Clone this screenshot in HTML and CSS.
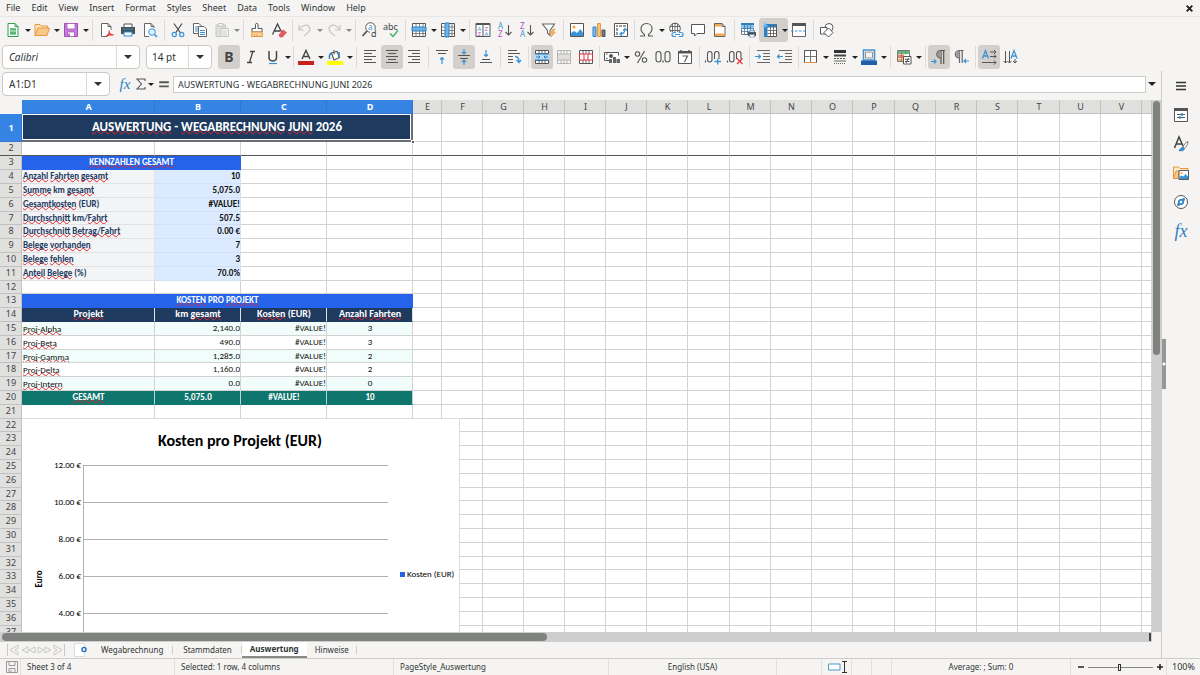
FILE: index.html
```html
<!DOCTYPE html>
<html lang="en">
<head>
<meta charset="utf-8">
<title>Wegabrechnung – Calc</title>
<link rel="stylesheet" href="styles.css">
</head>
<body>
<div class="app">
  <header class="menubar">
    <nav class="menus">
      <button>File</button><button>Edit</button><button>View</button><button>Insert</button><button>Format</button><button>Styles</button><button>Sheet</button><button>Data</button><button>Tools</button><button>Window</button><button>Help</button>
    </nav>
    <button class="close" aria-label="Close document"><svg viewBox="0 0 8 8"><path d="M1.5 1.5l5 5M6.500 1.500l-5 5" stroke="#222" stroke-width="1.7"/></svg></button>
  </header>

  <div class="toolbar standard">
    <button class="tool" aria-label="New"><svg viewBox="0 0 16 16"><path d="M3 1.500h7l3 3v10H3z" fill="#fff" stroke="#2e9e50"/><path d="M10 1.500v3h3M5 7h6M5 9.500h6M5 12h6" stroke="#2e9e50" fill="none"/><path d="M5 6.500h6v5.500H5z" fill="#58b873"/><path d="M5 9h6" stroke="#fff" stroke-width=".7"/></svg></button><button class="drop" aria-label="New options"></button>
    <button class="tool" aria-label="Open"><svg viewBox="0 0 16 16"><path d="M1 13.500V2.500h5l1.500 1.500h6v2" fill="#fbe3c0" stroke="#e8963c"/><path d="M1 13.500L4 6h11.500l-2.500 7.500z" fill="#f9c98a" stroke="#e8963c"/></svg></button><button class="drop" aria-label="Open options"></button>
    <button class="tool" aria-label="Save"><svg viewBox="0 0 16 16"><path d="M1.500 1.500h13v13h-13z" fill="#c77dd8" stroke="#a04cb5"/><path d="M4 1.500h8v5.500H4zM4.500 10h7v4.500h-7z" fill="#fff" stroke="#a04cb5" stroke-width=".7"/><path d="M6 11.500v3" stroke="#a04cb5" stroke-width="1.500"/></svg></button><button class="drop" aria-label="Save options"></button>
    <span class="sep"></span>
    <button class="tool" aria-label="Export as PDF"><svg viewBox="0 0 16 16"><path d="M13 8V4.500l-3-3H3.500v13H9" fill="#fff" stroke="#666"/><path d="M10 1.500v3h3" fill="none" stroke="#666"/><path d="M8 14.500c3-2 3.500-4.500 3-6M11 8.500c0 3 2 4.500 4.500 4.500-2-1-5 0-7.500 1.500" fill="none" stroke="#e0343d" stroke-width="1.200"/></svg></button>
    <button class="tool" aria-label="Print"><svg viewBox="0 0 16 16"><path d="M4 5V2h8v3" fill="#fff" stroke="#555"/><path d="M1 5h14v7H1z" fill="#4d4f51"/><path d="M2.500 7h11" stroke="#2c8fd8"/><path d="M4 10h8v4H4z" fill="#fff" stroke="#2c8fd8"/></svg></button>
    <button class="tool" aria-label="Print preview"><svg viewBox="0 0 16 16"><path d="M12 6V4.500l-3-3H2.500v13H7" fill="#fff" stroke="#666"/><path d="M9 1.500v3h3" fill="none" stroke="#666"/><circle cx="10" cy="10" r="3.300" fill="#dcefff" stroke="#3a93d6"/><path d="M12.500 12.500l2.500 2.500" stroke="#3a93d6" stroke-width="1.600"/></svg></button>
    <span class="sep"></span>
    <button class="tool" aria-label="Cut"><svg viewBox="0 0 16 16"><path d="M4 1.500l6.500 9.500M12 1.500L5.500 11" stroke="#4a4a4a" stroke-width="1.200"/><circle cx="4.300" cy="12.500" r="2.100" fill="none" stroke="#3a93d6" stroke-width="1.200"/><circle cx="11.700" cy="12.500" r="2.100" fill="none" stroke="#3a93d6" stroke-width="1.200"/></svg></button>
    <button class="tool" aria-label="Copy"><svg viewBox="0 0 16 16"><path d="M1.500 1.500h5.500l2.500 2.500v7.500h-8z" fill="#fff" stroke="#666"/><path d="M3 5h4M3 7h3M3 9h3" stroke="#3a93d6"/><path d="M6.500 4.500H12l2.500 2.500v7.500h-8z" fill="#fff" stroke="#666"/><path d="M8 8.500h5M8 10.500h5M8 12.500h5" stroke="#3a93d6"/></svg></button>
    <button class="tool faded" aria-label="Paste"><svg viewBox="0 0 16 16"><path d="M2 3h9.500v11.500H2z" fill="#ccc" stroke="#999"/><path d="M4.500 1.500h4.500v3H4.500z" fill="#eee" stroke="#999"/><path d="M7 6.500h7.500v8H7z" fill="#f4f4f4" stroke="#999"/><path d="M8.500 9h4.500M8.500 11h4.500M8.500 13h4.500" stroke="#aaa"/></svg></button><button class="drop faded" aria-label="Paste options"></button>
    <span class="sep"></span>
    <button class="tool" aria-label="Clone formatting"><svg viewBox="0 0 16 16"><path d="M6.500 6.500V2.500c0-1.500 2.500-1.500 2.500 0v4h4v3.500H3V6.500z" fill="#fff" stroke="#555"/><path d="M3 10h10l.5 4.500H2.500z" fill="#fbd2a0" stroke="#e8963c"/><path d="M5.500 12v2.500M8 12v2.500" stroke="#e8963c" stroke-width=".7"/></svg></button>
    <button class="tool" aria-label="Clear direct formatting"><svg viewBox="0 0 16 16"><path d="M1.500 12.500L6.500 2l4 8M3.500 9h5.500" fill="none" stroke="#444" stroke-width="1.300"/><path d="M8 13l4-5 3.500 2.500-4 4.500H9z" fill="#ea5a60" stroke="#d8343c" stroke-width=".6"/></svg></button>
    <span class="sep tight"></span>
    <button class="tool faded" aria-label="Undo"><svg viewBox="0 0 16 16"><path d="M2 3v5h5M2.500 7.500C5 3.500 9 2 11.500 4s2 5.500-4.500 10" fill="none" stroke="#999" stroke-width="1.200"/></svg></button><button class="drop faded" aria-label="Undo list"></button>
    <button class="tool faded" aria-label="Redo"><svg viewBox="0 0 16 16"><path d="M14 3v5H9M13.500 7.500C11 3.500 7 2 4.500 4s-2 5.500 4.500 10" fill="none" stroke="#999" stroke-width="1.200"/></svg></button><button class="drop faded" aria-label="Redo list"></button>
    <span class="sep"></span>
    <button class="tool" aria-label="Find and replace"><svg viewBox="0 0 16 16"><circle cx="9.500" cy="5.500" r="4.800" fill="#fff" stroke="#555"/><path d="M6 9l-4.500 5" stroke="#555" stroke-width="1.800"/><path d="M9 8h7v8H9z" fill="#f5f4f2"/><text x="7" y="8" class="ic-text blue" font-size="8">a</text><text x="10" y="15" class="ic-text dark" font-size="9">d</text></svg></button>
    <button class="tool" aria-label="Spelling"><svg viewBox="0 0 16 16"><text x="0" y="8" class="ic-text dark" font-size="9">abc</text><path d="M7 11.500l3 3 5-6" fill="none" stroke="#35b565" stroke-width="1.400"/></svg></button>
    <span class="sep"></span>
    <button class="tool" aria-label="Row"><svg viewBox="0 0 16 16"><path d="M1.500 1.500h13v13h-13z" fill="#fff" stroke="#555"/><path d="M5 1.500v13M8.500 1.500v13M12 1.500v13M1.500 11.500h13" stroke="#666" stroke-width=".8"/><path d="M1 5h14v4H1z" fill="#6fb4e8" stroke="#2c80c4"/></svg></button><button class="drop" aria-label="Row options"></button>
    <button class="tool" aria-label="Column"><svg viewBox="0 0 16 16"><path d="M1.500 1.500h13v13h-13z" fill="#fff" stroke="#555"/><path d="M12 1.500v13M1.500 5h13M1.500 8.500h13M1.500 11.500h13" stroke="#666" stroke-width=".8"/><path d="M5 1h4v14H5z" fill="#6fb4e8" stroke="#2c80c4"/></svg></button><button class="drop" aria-label="Column options"></button>
    <span class="sep"></span>
    <button class="tool" aria-label="Sort"><svg viewBox="0 0 16 16"><path d="M1 1.500h14v13H1zM8 2v12" fill="#fff" stroke="#555"/><path d="M1 2h14" stroke="#555" stroke-width="2"/><g font-size="6"><text x="2.500" y="8.500" class="ic-text blue">A</text><text x="2.500" y="14" class="ic-text purple">Z</text><text x="9.500" y="8.500" class="ic-text purple">Z</text><text x="9.500" y="14" class="ic-text blue">A</text></g></svg></button>
    <button class="tool" aria-label="Sort ascending"><svg viewBox="0 0 16 16"><g font-size="8"><text x="1" y="7" class="ic-text blue">A</text><text x="1" y="15" class="ic-text purple">Z</text></g><path d="M11.500 3v10M8.500 10l3 3 3-3" fill="none" stroke="#555" stroke-width="1.100"/></svg></button>
    <button class="tool" aria-label="Sort descending"><svg viewBox="0 0 16 16"><g font-size="8"><text x="1" y="7" class="ic-text purple">Z</text><text x="1" y="15" class="ic-text blue">A</text></g><path d="M11.500 3v10M8.500 10l3 3 3-3" fill="none" stroke="#555" stroke-width="1.100"/></svg></button>
    <button class="tool" aria-label="AutoFilter"><svg viewBox="0 0 16 16"><path d="M1.500 2h12L9 8.500v5L6.500 11V8.500z" fill="#fff" stroke="#666" stroke-width="1.100"/><path d="M12 7l-3 4.500h2.500L10 15l4.500-5H12L14 7z" fill="#fbb45c" stroke="#e8963c" stroke-width=".6"/></svg></button>
    <span class="sep"></span>
    <button class="tool" aria-label="Insert image"><svg viewBox="0 0 16 16"><path d="M1.500 1.500h13v13h-13z" fill="#fff" stroke="#555"/><circle cx="5" cy="5" r="1.500" fill="#f6a23c"/><path d="M2 14v-3l3-2 3 2 3.500-4L14 11v3z" fill="#3a93d6"/></svg></button>
    <button class="tool" aria-label="Insert chart"><svg viewBox="0 0 16 16"><path d="M2 5h3v9.500H2z" fill="#7fbcec" stroke="#2c80c4"/><path d="M6.500 1.500h3v13h-3z" fill="#fbc27c" stroke="#e8963c"/><path d="M11 8h3v6.500h-3z" fill="#777" stroke="#555"/></svg></button>
    <button class="tool" aria-label="Insert pivot table"><svg viewBox="0 0 16 16"><path d="M1.500 1.500h13v13h-13z" fill="#fff" stroke="#555"/><path d="M3 3h2v2H3zM6 3h3v2H6zM10 3h3v2h-3zM3 6h2v3H3zM3 10h2v3H3z" fill="#999"/><path d="M7 12c4 0 5-2 5-5M9 10l-2 2 2 2M10 8.500l2-2 2 2" fill="none" stroke="#3a93d6" stroke-width="1.200"/></svg></button>
    <span class="sep tight"></span>
    <button class="tool" aria-label="Special character"><svg viewBox="0 0 16 16"><path d="M1 14h4.500v-1.500C2.500 10.500 2 8.500 2 6.500 2 3.500 4.500 1.500 7.500 1.500s5.500 2 5.500 5c0 2-.5 4-3.500 6V14H14" fill="none" stroke="#555" stroke-width="1.100"/></svg></button><button class="drop" aria-label="Special character list"></button>
    <button class="tool" aria-label="Insert hyperlink"><svg viewBox="0 0 16 16"><circle cx="7" cy="6.500" r="5.300" fill="#fff" stroke="#555"/><path d="M2 4.500h10M2 8.500h10M7 1v11M4.500 2v9M9.500 2v9" stroke="#555" stroke-width=".8"/><path d="M3 10h13v6H3z" fill="#f5f4f2"/><path d="M8 10.500H6a2 2 0 0 0 0 4h2M11 10.500h2a2 2 0 0 1 0 4h-2M7 12.500h5" fill="none" stroke="#3a93d6" stroke-width="1.200"/></svg></button>
    <button class="tool" aria-label="Insert comment"><svg viewBox="0 0 16 16"><path d="M1.500 2.500h13v9H7L4.500 14v-2.500h-3z" fill="#fff" stroke="#555"/></svg></button>
    <button class="tool" aria-label="Headers and footers"><svg viewBox="0 0 16 16"><path d="M2.500 1.500h7.500l3 3v10H2.500z" fill="#fff" stroke="#666"/><path d="M3 2h6.500v2.500H3zM3 11.500h9.500V14H3z" fill="#f4a84f"/><path d="M10 1.500v3h3" fill="none" stroke="#666"/></svg></button>
    <span class="sep"></span>
    <button class="tool" aria-label="Define print area"><svg viewBox="0 0 16 16"><path d="M1.500 1.500h12v11h-12z" fill="#fff" stroke="#777"/><path d="M1 1h13v6H1z" fill="#8cc4ee"/><path d="M1 1h13v2H1z" fill="#2c80c4"/><path d="M1.500 6.500h12M1.500 9.500h12M4.500 1v11.500M7.500 1v11.500M10.500 1v11.500" stroke="#3a78ac" stroke-width=".8"/><path d="M8 10h8v4H8z" fill="#555"/><path d="M9.500 8.500h5V10h-5zM9.500 12.500h5V15h-5z" fill="#fff" stroke="#3a78ac" stroke-width=".6"/></svg></button>
    <span class="combo on"><button class="tool" aria-label="Freeze rows and columns"><svg viewBox="0 0 16 16"><path d="M2.500 2.500h12v12h-12z" fill="#fff" stroke="#555"/><path d="M2 2h12.500v3.500h-9V15H2z" fill="#2c80c4"/><path d="M5.500 8.500h9M5.500 11.500h9M8.500 2.500v12M11.500 2.500v12" stroke="#555" stroke-width=".8"/><path d="M0 3.500h6M3 0v6M1 1l4 4M5 1L1 5" stroke="#7fc0f0" stroke-width=".8"/></svg></button><button class="drop" aria-label="Freeze options"></button></span>
    <button class="tool" aria-label="Split window"><svg viewBox="0 0 16 16"><path d="M1.500 1.500h13v13h-13z" fill="#fff" stroke="#666"/><path d="M1 2.500h14" stroke="#555" stroke-width="3"/><path d="M0 9h16" stroke="#3a93d6" stroke-dasharray="2.500 1.500"/></svg></button>
    <span class="sep"></span>
    <button class="tool" aria-label="Show draw functions"><svg viewBox="0 0 16 16"><circle cx="10" cy="5.500" r="4" fill="#fff" stroke="#555"/><path d="M1.500 5.500h6.500v6.500h-6.500z" fill="#fff" stroke="#555"/><path d="M9.500 6l4.500 4.500-4.500 4.500L5 10.500z" fill="#fff" stroke="#555"/></svg></button>
  </div>

  <div class="toolbar formatting">
    <div class="combobox font-name"><input type="text" value="Calibri" aria-label="Font name"><button aria-label="Font list"></button></div>
    <div class="combobox font-size"><input type="text" value="14 pt" aria-label="Font size"><button aria-label="Size list"></button></div>
    <button class="tool on" aria-label="Bold"><b class="bold-sign">B</b></button>
    <button class="tool" aria-label="Italic"><svg viewBox="0 0 16 16"><path d="M7 2.500h5M4 13.500h5M9.800 2.500l-3.300 11" stroke="#444" stroke-width="1.300"/></svg></button>
    <button class="tool" aria-label="Underline"><svg viewBox="0 0 16 16"><path d="M4 2v6.500c0 4.500 7.500 4.500 7.500 0V2" fill="none" stroke="#444" stroke-width="1.500"/><path d="M4 14.500h8" stroke="#3a93d6" stroke-width="1.200"/></svg></button><button class="drop" aria-label="Underline options"></button>
    <span class="sep tight"></span>
    <button class="tool" aria-label="Font color"><svg viewBox="0 0 16 16"><path d="M4 10L8 1.500l4 8.500M5.500 7.500h5" fill="none" stroke="#444" stroke-width="1.400"/><path d="M0 12h16v4H0z" fill="#c9211e"/></svg></button><button class="drop" aria-label="Font color list"></button>
    <button class="tool" aria-label="Highlighting"><svg viewBox="0 0 16 16"><path d="M0 12h16v4H0z" fill="#ffff00"/><path d="M4.500 4l5.500-1.500 2.500 6-5.500 2.500z" fill="#fff" stroke="#555" stroke-width="1.100"/><path d="M7 5.500V1" stroke="#555"/><path d="M2.500 10c-.5-3.500 0-5 2-6M12 8.500V3" fill="none" stroke="#2c80c4" stroke-width="1.500"/></svg></button><button class="drop" aria-label="Highlighting list"></button>
    <span class="sep"></span>
    <button class="tool" aria-label="Align left"><svg viewBox="0 0 16 16"><path d="M2 1.500h12M2 4.500h8M2 7.500h12M2 10.500h8M2 13.500h12" stroke="#555"/></svg></button>
    <button class="tool on" aria-label="Center horizontally"><svg viewBox="0 0 16 16"><path d="M2 1.500h12M4 4.500h8M2 7.500h12M4 10.500h8M2 13.500h12" stroke="#555"/></svg></button>
    <button class="tool" aria-label="Align right"><svg viewBox="0 0 16 16"><path d="M2 1.500h12M6 4.500h8M2 7.500h12M6 10.500h8M2 13.500h12" stroke="#555"/></svg></button>
    <span class="sep"></span>
    <button class="tool" aria-label="Align top"><svg viewBox="0 0 16 16"><path d="M2 1.500h12M4 4.500h8" stroke="#555"/><path d="M8 15V8.500M6 10.500l2-2 2 2" fill="none" stroke="#3a93d6" stroke-width="1.200"/></svg></button>
    <button class="tool on" aria-label="Center vertically"><svg viewBox="0 0 16 16"><path d="M2 6.500h12M4 9.500h8" stroke="#555"/><path d="M8 0v5M6 3l2 2 2-2M8 16v-5M6 13l2-2 2 2" fill="none" stroke="#3a93d6" stroke-width="1.200"/></svg></button>
    <button class="tool" aria-label="Align bottom"><svg viewBox="0 0 16 16"><path d="M4 10.500h8M2 13.500h12" stroke="#555"/><path d="M8 1v6.500M6 5.500l2 2 2-2" fill="none" stroke="#3a93d6" stroke-width="1.200"/></svg></button>
    <span class="sep"></span>
    <button class="tool" aria-label="Wrap text"><svg viewBox="0 0 16 16"><path d="M2 1.500h9M2 4.500h12M2 7.500h5M2 10.500h5M2 13.500h5" stroke="#555"/><path d="M9 7.500c3 0 4 1.500 4 5.500M10.500 11l2.500 2.500 2-2.500" fill="none" stroke="#3a93d6" stroke-width="1.300"/></svg></button>
    <span class="sep"></span>
    <button class="tool on" aria-label="Merge and center"><svg viewBox="0 0 16 16"><path d="M1.500 1.500h13v13h-13z" fill="#fff" stroke="#555"/><path d="M1.500 4.500h13M1.500 11.500h13M5 1.500v3M8 1.500v3M11 1.500v3M5 11.500v3M8 11.500v3M11 11.500v3" stroke="#555" stroke-width=".9"/><path d="M1 5h14v6H1z" fill="#b9dcf6"/><path d="M1 5h14M1 11h14M2 8h4M14 8h-4M4.500 6.500L6 8 4.500 9.500M11.500 6.500L10 8l1.500 1.500" fill="none" stroke="#2c80c4"/></svg></button>
    <button class="tool faded" aria-label="Merge cells"><svg viewBox="0 0 16 16"><path d="M1.500 1.500h13v13h-13z" fill="#fff" stroke="#777"/><path d="M1.500 5h13v6h-13z" fill="#ccc" stroke="#777"/><path d="M5 1.500V5M8 1.500V5M11 1.500V5M5 11v3.500M8 11v3.500M11 11v3.500" stroke="#777"/></svg></button>
    <button class="tool" aria-label="Unmerge cells"><svg viewBox="0 0 16 16"><path d="M1.500 1.500h13v13h-13z" fill="#fff" stroke="#555"/><path d="M5 1.500V5M8 1.500V5M11 1.500V5M5 11v3.500M8 11v3.500M11 11v3.500" stroke="#555" stroke-width=".9"/><path d="M1.500 5h13v6h-13zM6 5v6M10 5v6" fill="#fff" stroke="#e0343d"/></svg></button>
    <span class="sep tight"></span>
    <button class="tool" aria-label="Format as currency"><svg viewBox="0 0 16 16"><path d="M5 11.500H.5v-8h14v3" fill="#fff" stroke="#555"/><circle cx="7" cy="7" r="2" fill="#555"/><path d="M2 5h1.500M2 9.500h1.500" stroke="#555"/><path d="M5 10h3v4H5zM9 8h3v6H9zM12.500 10H16v4h-3.500z" fill="#666"/></svg></button><button class="drop" aria-label="Currency list"></button>
    <button class="tool" aria-label="Format as percent"><svg viewBox="0 0 16 16"><circle cx="4.500" cy="5" r="2.200" fill="none" stroke="#555" stroke-width="1.100"/><circle cx="11.500" cy="11" r="2.200" fill="none" stroke="#555" stroke-width="1.100"/><path d="M11.500 2L4.500 14" stroke="#555" stroke-width="1.100"/></svg></button>
    <button class="tool" aria-label="Format as number"><svg viewBox="0 0 16 16"><rect x="1" y="2.500" width="5" height="10.500" rx="2.500" fill="none" stroke="#555" stroke-width="1.100"/><rect x="10" y="2.500" width="5" height="10.500" rx="2.500" fill="none" stroke="#555" stroke-width="1.100"/><path d="M8 11.500v2" stroke="#555" stroke-width="1.300"/></svg></button>
    <button class="tool" aria-label="Format as date"><svg viewBox="0 0 16 16"><path d="M1.500 2.500h13v12h-13z" fill="#fff" stroke="#555"/><path d="M1 3.500h14" stroke="#555" stroke-width="2"/><path d="M4 1v3M12 1v3" stroke="#555" stroke-width="1.500"/><path d="M5.500 7h5L7.500 13" fill="none" stroke="#555" stroke-width="1.100"/></svg></button>
    <span class="sep"></span>
    <button class="tool" aria-label="Add decimal place"><svg viewBox="0 0 16 16"><rect x="2.500" y="2.500" width="4.500" height="10.500" rx="2.200" fill="none" stroke="#555" stroke-width="1.100"/><rect x="9.500" y="2.500" width="4.500" height="10.500" rx="2.200" fill="none" stroke="#555" stroke-width="1.100"/><path d="M.5 11.500v2" stroke="#555" stroke-width="1.200"/><path d="M9 10h7v6H9z" fill="#f5f4f2"/><path d="M9.500 12.500H16M12.700 9.500v6" stroke="#3a93d6" stroke-width="1.300"/></svg></button>
    <button class="tool" aria-label="Delete decimal place"><svg viewBox="0 0 16 16"><rect x="2.500" y="2.500" width="4.500" height="10.500" rx="2.200" fill="none" stroke="#555" stroke-width="1.100"/><rect x="9.500" y="2.500" width="4.500" height="10.500" rx="2.200" fill="none" stroke="#555" stroke-width="1.100"/><path d="M.5 11.500v2" stroke="#555" stroke-width="1.200"/><path d="M9 10h7v6H9z" fill="#f5f4f2"/><path d="M10 9.500l5.500 5.500M15.500 9.500L10 15" stroke="#e0343d" stroke-width="1.200"/></svg></button>
    <span class="sep"></span>
    <button class="tool" aria-label="Increase indent"><svg viewBox="0 0 16 16"><path d="M2 1.500h13M8 4.500h7M8 7.500h7M8 10.500h7M2 13.500h13" stroke="#666"/><path d="M0 7.500h5.500M3.500 5.500l2 2-2 2" fill="none" stroke="#3a93d6" stroke-width="1.200"/></svg></button>
    <button class="tool" aria-label="Decrease indent"><svg viewBox="0 0 16 16"><path d="M2 1.500h13M8 4.500h7M8 7.500h7M8 10.500h7M2 13.500h13" stroke="#666"/><path d="M6 7.500H.5M2.500 5.500l-2 2 2 2" fill="none" stroke="#3a93d6" stroke-width="1.200"/></svg></button>
    <span class="sep tight"></span>
    <button class="tool" aria-label="Borders"><svg viewBox="0 0 16 16"><path d="M1.500 1.500h12v12h-12z" fill="#fff" stroke="#555"/><path d="M7.500 2v11M2 7.500h11" stroke="#777"/><path d="M1.500 13.500h12" stroke="#e09040"/></svg></button><button class="drop" aria-label="Border list"></button>
    <button class="tool" aria-label="Border style"><svg viewBox="0 0 16 16"><path d="M2 2.500h12" stroke="#333" stroke-width="3"/><path d="M2 6.500h12" stroke="#444" stroke-width="2"/><path d="M2 9.500h12" stroke="#555" stroke-dasharray="2 1"/><path d="M2 12h12" stroke="#666"/><path d="M2 14.500h12" stroke="#666" stroke-dasharray="1 1"/></svg></button><button class="drop" aria-label="Border style list"></button>
    <button class="tool" aria-label="Border color"><svg viewBox="0 0 16 16"><path d="M2.500 1h11v10h-11z" fill="#fff" stroke="#4a90cc" stroke-width="1.600"/><path d="M4.500 3h7v6h-7z" fill="#f5f4f2" stroke="#777" stroke-width=".8"/><path d="M0 11.500h16V16H0z" fill="#1f5fa8"/></svg></button><button class="drop" aria-label="Border color list"></button>
    <span class="sep"></span>
    <button class="tool" aria-label="Conditional formatting"><svg viewBox="0 0 16 16"><path d="M1.500 1.500h12v11h-12z" fill="#fff" stroke="#777"/><path d="M2 2h11.500v3H2z" fill="#62bd7c"/><path d="M2 5.500h6V9H2z" fill="#ef7d6c"/><path d="M2 9.500h5V12H2z" fill="#f8b45d"/><path d="M5.500 1.500v11M9.500 1.500v4" stroke="#777" stroke-width=".7"/><path d="M7.500 7.500h7.500v7.500H7.500z" fill="#fff" stroke="#555"/><path d="M9 10.300h4.500M9 12.500h4.500M12.500 9l-2.500 5" stroke="#444" stroke-width=".9"/></svg></button><button class="drop" aria-label="Conditional formatting list"></button>
    <span class="sep"></span>
    <button class="tool on" aria-label="Left to right"><svg viewBox="0 0 16 16"><path d="M10 9C4.500 9 4.500 1.500 10 1.500h4M10 1.500V15M12.700 1.500V15" fill="none" stroke="#555" stroke-width="1.200"/><path d="M10 2v6.500C5.500 8.500 5.500 2 10 2z" fill="#999"/><path d="M0 12.500h5M3 10.500l2 2-2 2" fill="none" stroke="#3a93d6" stroke-width="1.200"/></svg></button>
    <button class="tool" aria-label="Right to left"><svg viewBox="0 0 16 16"><path d="M6.500 9C1 9 1 1.500 6.500 1.500h4M6.500 1.500V14M9.200 1.500V14" fill="none" stroke="#666" stroke-width="1.200"/><path d="M6.500 2v6.500C2 8.500 2 2 6.500 2z" fill="#999"/><path d="M16 12h-5M13 10l-2 2 2 2" fill="none" stroke="#3a93d6" stroke-width="1.200"/></svg></button>
    <span class="sep"></span>
    <button class="tool on" aria-label="Text direction left to right"><svg viewBox="0 0 16 16"><path d="M1.500 9.500L4.500 1.500l3 8M2.500 7h4" fill="none" stroke="#3a93d6" stroke-width="1.300"/><path d="M9 3h6M9 7.500h6M1 13.500h14M13 1l2 2-2 2M13 5.500l2 2-2 2M13 11.500l2 2-2 2" fill="none" stroke="#555"/></svg></button>
    <button class="tool" aria-label="Text direction top to bottom"><svg viewBox="0 0 16 16"><path d="M8 9.500l3-8 3 8M9 7h4" fill="none" stroke="#3a93d6" stroke-width="1.300"/><path d="M2.500 2v12M6.500 2v12M12 10v4M.5 12l2 2 2-2M4.500 12l2 2 2-2M10 12l2 2 2-2" fill="none" stroke="#555"/></svg></button>
  </div>

  <div class="workspace">
    <main class="document">
      <div class="formula-bar">
        <div class="combobox name-box"><input type="text" value="A1:D1" aria-label="Name box"><button aria-label="Named ranges"></button></div>
        <button class="fx" aria-label="Function wizard">fx</button>
        <button class="sigma" aria-label="Select function"><svg viewBox="0 0 12 14"><path d="M10 4V2H2l4.500 5L2 12h8v-2" fill="none" stroke="#555" stroke-width="1.100"/></svg></button><button class="drop" aria-label="Function list"></button>
        <button class="equals" aria-label="Formula"><svg viewBox="0 0 10 10"><path d="M1 3.500h8M1 7h8" stroke="#555" stroke-width="1.600"/></svg></button>
        <input class="formula" type="text" value="AUSWERTUNG - WEGABRECHNUNG JUNI 2026" aria-label="Input line">
        <button class="drop expand" aria-label="Expand formula bar"></button>
      </div>

      <div class="sheet-area">
        <div class="sheet">
          <table class="grid">
            <colgroup id="columns"></colgroup>
            <thead><tr id="letters"></tr></thead>
            <tbody id="rows"></tbody>
          </table>
          <span class="fill-handle"></span>
          <svg class="chart" viewBox="0 0 438 300" role="img" aria-label="Kosten pro Projekt (EUR)">
            <path d="M0 0h438v300H0z" fill="#fff"/>
            <path d="M0 .5h437.500V300" fill="none" stroke="#dcdcdc"/>
            <text x="218" y="28" class="chart-title" text-anchor="middle">Kosten pro Projekt (EUR)</text>
            <path d="M61 47.500h305M61 84.500h305M61 121.500h305M61 158.500h305M61 195.500h305M61.500 47v253" stroke="#b0b0b0" fill="none"/>
            <g class="chart-label" text-anchor="end"><text x="59" y="50">12.00 €</text><text x="59" y="87">10.00 €</text><text x="59" y="124">8.00 €</text><text x="59" y="161">6.00 €</text><text x="59" y="198">4.00 €</text></g>
            <text class="axis-title" text-anchor="middle" transform="translate(20 161) rotate(-90)">Euro</text>
            <path d="M378 154h5v5h-5z" fill="#2563eb"/>
            <text x="385" y="159" class="chart-label">Kosten (EUR)</text>
          </svg>
        </div>
        <div class="vscroll"><span class="thumb"></span></div>
      </div>
      <div class="hscroll"><span class="thumb"></span><span class="split-mark"></span></div>

      <div class="tabs">
        <svg class="tab-nav" viewBox="0 0 60 12"><path d="M1.500 0v12M12 1L4 6l8 5V8L9 6l3-2zM22 3l-6 3 6 3zM29 3l-6 3 6 3zM32 3l6 3-6 3zM39 3l6 3-6 3zM48 1l8 5-8 5V8l3-2-3-2zM58.500 0v12" fill="none" stroke="#c8c8c6"/></svg>
        <button class="add-sheet" aria-label="Add sheet"><svg viewBox="0 0 13 14"><path d="M.5.500h10v13H.5z" fill="#fff" stroke="#ddd"/><circle cx="10" cy="6.500" r="2" fill="#fff" stroke="#2b6fc2" stroke-width="1.500"/></svg></button>
        <button class="tab">Wegabrechnung</button><button class="tab">Stammdaten</button><button class="tab active">Auswertung</button><button class="tab">Hinweise</button>
      </div>
    </main>

    <aside class="sidebar">
      <span class="collapse"></span>
      <button aria-label="Sidebar settings"><svg viewBox="0 0 16 16"><path d="M3 4.500h10M3 8h10M3 11.500h10" stroke="#333" stroke-width="1.500"/></svg></button>
      <button aria-label="Properties"><svg viewBox="0 0 16 16"><path d="M1.500 1.500h13v13h-13z" fill="#fff" stroke="#555"/><path d="M1 2.500h14" stroke="#555" stroke-width="3"/><path d="M4 7.500h8M4 10.500h8" stroke="#555"/><path d="M9 6v3M7 9v3" stroke="#3a93d6" stroke-width="1.500"/></svg></button>
      <button aria-label="Styles"><svg viewBox="0 0 16 16"><path d="M1.500 12L6 1l4 9M3 8h6" fill="none" stroke="#444" stroke-width="1.500"/><path d="M15 5.500c-3 1.500-4.500 4-5 6l1.500 1C13 11 15 8.500 15 5.500z" fill="#fff" stroke="#555" stroke-width=".8"/><path d="M10 11.500c-2 0-2.500 1.500-4 3 2.500.7 5 .3 5.500-2z" fill="#3a93d6" stroke="#2c80c4"/></svg></button>
      <button aria-label="Gallery"><svg viewBox="0 0 16 16"><path d="M.5 13.500V2h5l1.500 1.500h8V6" fill="#fdeacb" stroke="#e8963c"/><path d="M.5 13.500L3 6h3v7.500z" fill="#f9c98a" stroke="#e8963c"/><path d="M6 5.500h9.500v9H6z" fill="#fff" stroke="#555"/><circle cx="8.500" cy="8" r="1" fill="#f6a23c"/><path d="M6.500 14v-2l2-1.500 2 1 2-2.500 2.500 2.500V14z" fill="#3a93d6"/></svg></button>
      <button aria-label="Navigator"><svg viewBox="0 0 16 16"><circle cx="8" cy="8" r="6.500" fill="#fff" stroke="#555"/><path d="M11.500 4.500L10 10l-5.500 1.500L6 6z" fill="#3a93d6" stroke="#2c80c4"/><circle cx="8" cy="8" r="1.200" fill="#fff"/></svg></button>
      <button class="fx big" aria-label="Functions">fx</button>
    </aside>
  </div>

  <footer class="status">
    <div class="f-save"><svg viewBox="0 0 12 12"><path d="M.5.500h11v11H.5zM3 .500v4h6v-4M3 11.500v-4h6v4M5 9v2.500" fill="none" stroke="#999"/></svg></div>
    <div class="f-sheet">Sheet 3 of 4</div>
    <div class="f-selection">Selected: 1 row, 4 columns</div>
    <div class="f-style">PageStyle_Auswertung</div>
    <div class="f-lang">English (USA)</div>
    <div class="f-insert"></div>
    <div class="f-mode"><svg viewBox="0 0 22 12"><path d="M.5 3h11.500v6H.5z" fill="#fff" stroke="#4a9cc9"/><path d="M14 .500h5M16.500.500v11M14 11.500h5" stroke="#333" fill="none"/></svg></div>
    <div class="f-small"></div>
    <div class="f-small"></div>
    <div class="f-sum">Average: ; Sum: 0</div>
    <div class="f-zoom"><button aria-label="Zoom out"><svg viewBox="0 0 8 8"><path d="M1 4h6" stroke="#222" stroke-width="1.500"/></svg></button><input type="range" min="0" max="100" value="48" aria-label="Zoom"><button aria-label="Zoom in"><svg viewBox="0 0 8 8"><path d="M1 4h6M4 1v6" stroke="#222" stroke-width="1.500"/></svg></button></div>
    <div class="f-percent">100%</div>
  </footer>
</div>
<script src="sheet.js"></script>
</body>
</html>
```
FILE: styles.css
```css
* { box-sizing: border-box; }
body { margin: 0; font: 9px/12px "Noto Sans", sans-serif; color: #2e3436; background: #f5f4f2; }
button, input { font: inherit; color: inherit; border: 0; padding: 0; margin: 0; background: none; }
svg { display: block; overflow: visible; }

.app { display: flex; flex-direction: column; height: 100vh; overflow: hidden; }

/* menu bar */
.menubar { display: flex; justify-content: space-between; height: 17px; padding: 0 6px 0 6px; border-bottom: 1px solid #e8e7e5; }
.menus { display: flex; gap: 11px; }
.close svg { width: 9px; height: 9px; }

/* toolbars */
.toolbar { display: flex; align-items: center; height: 27px; padding: 0 0 1px 2px; }
.tool { flex: none; display: flex; align-items: center; justify-content: center; width: 22px; height: 24px; border-radius: 3px; }
.tool svg { width: 16px; height: 16px; }
.bold-sign { font-size: 14px; line-height: 20px; color: #444; }
.on { background: #d3d0cc; border-radius: 3px; }
.combo { display: flex; align-items: center; }
.drop { flex: none; width: 7px; height: 22px; display: flex; align-items: center; justify-content: center; }
.drop::after { content: ""; border: 3px solid transparent; border-top-color: #222; border-bottom: 0; }
.faded { opacity: .5; }
.sep { flex: none; width: 6px; height: 22px; background: linear-gradient(#dddcda, #dddcda) center / 1px 100% no-repeat; }
.sep.tight { width: 4px; }
.ic-text { font-family: "Noto Sans", sans-serif; }
.blue { fill: #3a93d6; }
.purple { fill: #b050c0; }
.dark { fill: #444; }

.combobox { display: flex; flex: none; height: 24px; background: #fff; border: 1px solid #cdc9c4; border-radius: 4px; font-size: 10px; overflow: hidden; }
.combobox input { flex: 1; min-width: 0; padding-left: 6px; }
.combobox button { width: 23px; border-left: 1px solid #dcd9d5; display: flex; align-items: center; justify-content: center; }
.combobox button::after { content: ""; border: 4px solid transparent; border-top-color: #2e3436; border-bottom: 0; }
.font-name { width: 138px; margin-right: 6px; }
.font-name input { font-style: italic; }
.font-size { width: 66px; margin-right: 6px; }
.font-size input { padding-left: 5px; }

/* workspace */
.workspace { flex: 1; min-height: 0; display: flex; }
.document { flex: 1; min-width: 0; display: flex; flex-direction: column; }
.formula-bar { display: flex; align-items: center; height: 29px; padding: 0 6px 3px 2px; }
.name-box { width: 108px; margin-right: 7px; }
.fx { font: italic 15px/16px "Liberation Serif", serif; color: #2c80c4; width: 16px; }
.sigma { margin-left: 2px; }
.sigma svg { width: 12px; height: 14px; }
.equals { margin: 0 3px 0 4px; }
.equals svg { width: 12px; height: 12px; }
.formula { flex: 1; min-width: 0; height: 17px; padding-left: 4px; background: #fff; border: 1px solid #d0ceca; }
.expand { margin-left: 2px; }
.expand::after { border-width: 4px 4px 0; }

/* sheet */
.sheet-area { flex: 1; min-height: 0; display: flex; }
.sheet { position: relative; flex: 1; min-width: 0; overflow: hidden; background: #fff; }
.grid { table-layout: fixed; width: 100%; border-spacing: 0; font-family: Carlito, Lato, sans-serif; color: #111; }
.grid th, .grid td { padding: 0 0 0 1px; border: 0 solid #d2d2d2; border-width: 0 1px 1px 0; overflow: hidden; white-space: nowrap; vertical-align: top; line-height: 12px; text-align: left; }
.grid th { background: #e0e0df; border-color: #c2c2c2; color: #444; font: 9px/12px "Noto Sans", sans-serif; text-align: center; }
.grid thead th { height: 14px; line-height: 13px; }
.grid thead th:first-child { background: #f5f4f2; border-color: #f5f4f2; }
.grid th.picked { background: #3584e4; border-color: #3078d0; color: #fff; font-weight: 700; vertical-align: middle; }
.grid tbody tr { height: 14px; }
.grid tbody tr:nth-child(5n+2) { height: 13px; }
.grid tbody tr:nth-child(1) { height: 28px; }
.grid tbody tr:nth-child(2) { height: 14px; }
.grid tbody tr:nth-child(2) td, .grid tbody tr:nth-child(2) th { border-bottom-color: #555; }

.grid .title { background: #1e3a5f; color: #fff; font-size: 13px; line-height: 16px; font-weight: 700; text-align: center; vertical-align: middle; border-width: 0 2px 2px 0; border-color: #6a6f76; box-shadow: inset 0 0 0 1px #fff; }
.grid .section { background: #2563eb; border-color: #2563eb; color: #fff; font-weight: 700; text-align: center; }
.grid .kpi { background: #f3f4f6; border-color: #e0e2e5; color: #1e3a5f; font-weight: 700; }
.grid .kpi-value { background: #dbeafe; border-color: #d2e1f6; color: #111; font-weight: 700; text-align: right; }
.grid .head { background: #1e3a5f; border-color: #dbe2ea; border-bottom-color: #1e3a5f; color: #fff; font-size: 10px; font-weight: 700; text-align: center; }
.grid .name { line-height: 10px; padding-top: 2px; }
.grid .num { text-align: right; }
.grid .mid { text-align: center; }
.grid .alt { background: #f0fdfa; }
.grid .total { background: #0f766e; border-color: #b7d6d3; border-bottom-color: #0f766e; color: #fff; font-weight: 700; text-align: center; }
.misspelt { text-decoration: underline wavy #e0262c 1px; text-underline-offset: -1px; text-decoration-skip-ink: none; }

.fill-handle { position: absolute; left: 411px; top: 40px; width: 4px; height: 4px; background: #555; border: 1px solid #fff; }
.chart { position: absolute; left: 22px; top: 318px; width: 438px; height: 300px; font-family: Carlito, Lato, sans-serif; }
.chart-title { font-size: 16px; font-weight: 700; }
.chart-label { font-size: 9px; }
.axis-title { font-size: 9px; font-weight: 700; }

.vscroll { width: 9px; background: #cecece; padding: 1px; }
.vscroll .thumb { display: block; width: 7px; height: 48%; border-radius: 4px; background: #7f827f; }
.hscroll { display: flex; justify-content: space-between; height: 10px; margin-right: 9px; padding: 1px 1px 1px 2px; background: #cecece; }
.hscroll .thumb { width: 47.4%; border-radius: 4px; background: #7f827f; }
.split-mark { width: 2px; background: #444; }

/* sheet tabs */
.tabs { display: flex; height: 16px; padding-left: 6px; font-size: 8px; }
.tab-nav { width: 60px; height: 12px; margin-top: 2px; }
.add-sheet { margin: 0 4px 0 8px; }
.add-sheet svg { width: 13px; height: 14px; }
.tab { padding: 0 10px; background: linear-gradient(#cfcecc, #cfcecc) right / 1px 8px no-repeat; }
.tab.active { padding: 0 8px; background: #fff; font-weight: 700; border-bottom: 2px solid #888a88; line-height: 10px; }
.tab.active + .tab { padding: 0 8px; }

/* sidebar */
.sidebar { position: relative; display: flex; flex-direction: column; align-items: center; gap: 13px; width: 39px; padding-top: 7px; border-left: 1px solid #cfcdca; }
.sidebar svg { width: 16px; height: 16px; }
.collapse { position: absolute; left: 0; top: 268px; width: 4px; height: 50px; background: radial-gradient(circle, #fff 1px, #949796 2px); }
.fx.big { font-size: 18px; }

/* status bar */
.status { display: flex; height: 17px; border-top: 1px solid #cfcdca; font-size: 8px; }
.status > div { display: flex; align-items: center; border-right: 1px solid #e2e0dd; white-space: nowrap; overflow: hidden; padding-left: 6px; }
.status > .f-save { width: 21px; }
.f-save svg { width: 12px; height: 12px; }
.f-sheet { width: 154px; }
.f-selection { width: 219px; }
.f-style { width: 215px; }
.status > .f-lang { width: 168px; justify-content: center; padding: 0; }
.f-insert { width: 45px; }
.f-mode { width: 30px; }
.f-mode svg { width: 22px; height: 12px; }
.f-small { width: 20px; }
.status > .f-sum { flex: 1; justify-content: center; padding: 0; }
.f-zoom { width: 96px; gap: 3px; }
.status > .f-percent { width: 33px; padding-left: 5px; border: 0; font-size: 9px; }
.f-zoom svg { width: 8px; height: 8px; }
.f-zoom input { appearance: none; width: 65px; height: 9px; background: linear-gradient(#8a8a88, #8a8a88) center / 100% 1px no-repeat; }
.f-zoom input::-webkit-slider-thumb { appearance: none; width: 3px; height: 7px; background: #f5f4f2; border: 1px solid #333; }
```
FILE: sheet.js
```js
const widths = [22, 133, 86, 86, 86, 29, 41, 41, 41, 41, 41, 41, 42, 41, 41, 41, 42, 41, 41, 41, 42, 41, 41];
const letters = 'ABCDEFGHIJKLMNOPQRSTUV'.split('').concat('');
const rowCount = 38;

// Words between underscores are flagged by the spell checker.
const cells = {
  1: [['title', '_AUSWERTUNG_ - _WEGABRECHNUNG_ _JUNI_ 2026', 4]],
  3: [['section', '_KENNZAHLEN_ _GESAMT_', 2]],
  13: [['section', '_KOSTEN_ PRO _PROJEKT_', 4]],
  14: [['head', '_Projekt_'], ['head', 'km _gesamt_'], ['head', '_Kosten_ (EUR)'], ['head', '_Anzahl_ _Fahrten_']],
  20: [['total', '_GESAMT_'], ['total', '5,075.0'], ['total', '#VALUE!'], ['total', '10']]
};

[
  ['_Anzahl_ _Fahrten_ _gesamt_', '10'],
  ['_Summe_ km _gesamt_', '5,075.0'],
  ['_Gesamtkosten_ (EUR)', '#VALUE!'],
  ['_Durchschnitt_ km/_Fahrt_', '507.5'],
  ['_Durchschnitt_ _Betrag/Fahrt_', '0.00 €'],
  ['_Belege_ _vorhanden_', '7'],
  ['_Belege_ _fehlen_', '3'],
  ['_Anteil_ _Belege_ (%)', '70.0%']
].forEach(([label, value], i) => {
  cells[4 + i] = [['kpi', label], ['kpi-value', value]];
});

[
  ['_Proj-Alpha_', '2,140.0', '3'],
  ['_Proj-Beta_', '490.0', '3'],
  ['_Proj-Gamma_', '1,285.0', '2'],
  ['_Proj-Delta_', '1,160.0', '2'],
  ['_Proj-Intern_', '0.0', '0']
].forEach(([name, km, trips], i) => {
  const alt = i % 2 ? '' : ' alt';
  cells[15 + i] = [['name' + alt, name], ['num' + alt, km], ['num' + alt, '#VALUE!'], ['mid' + alt, trips]];
});

const mark = text => text.replace(/_([^_]+)_/g, '<span class="misspelt">$1</span>');

document.getElementById('columns').innerHTML =
  widths.map(w => `<col style="width:${w}px">`).join('') + '<col>';
document.getElementById('letters').innerHTML =
  '<th></th>' + letters.map((l, i) => `<th scope="col"${i < 4 ? ' class="picked"' : ''}>${l}</th>`).join('');

let html = '';
for (let r = 1; r <= rowCount; r++) {
  html += `<tr><th scope="row"${r === 1 ? ' class="picked"' : ''}>${r}</th>`;
  let used = 0;
  for (const [cls, text, span = 1] of cells[r] || []) {
    html += `<td class="${cls}"${span > 1 ? ` colspan="${span}"` : ''}>${mark(text)}</td>`;
    used += span;
  }
  html += '<td></td>'.repeat(letters.length - used) + '</tr>';
}
document.getElementById('rows').innerHTML = html;
```
